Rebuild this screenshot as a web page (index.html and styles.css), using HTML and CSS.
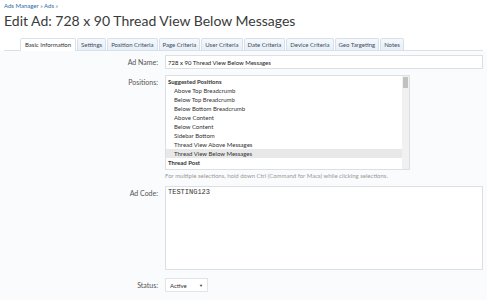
FILE: index.html
```html
<!DOCTYPE html>
<html lang="en">

<head>
    <meta charset="UTF-8">
    <title>Edit Ad</title>
    <link rel="stylesheet" href="styles.css">
</head>

<body>
    <div class="crumbs">
        <a href="#">Ads Manager</a> <span class="sep">&raquo;</span>
        <a href="#">Ads</a> <span class="sep">&raquo;</span>
    </div>
    <h1 class="title">Edit Ad: 728 x 90 Thread View Below Messages</h1>

    <ul class="tabs">
        <li class="active">Basic Information</li>
        <li>Settings</li>
        <li>Position Criteria</li>
        <li>Page Criteria</li>
        <li>User Criteria</li>
        <li>Date Criteria</li>
        <li>Device Criteria</li>
        <li>Geo Targeting</li>
        <li>Notes</li>
    </ul>

    <form class="ad-form">
        <div class="row">
            <label class="row-label">Ad Name:</label>
            <div class="row-input">
                <input class="text-input" type="text" value="728 x 90 Thread View Below Messages">
            </div>
        </div>

        <div class="row">
            <label class="row-label">Positions:</label>
            <div class="row-input">
                <div class="listbox">
                    <div class="options">
                        <div class="group">Suggested Positions</div>
                        <div class="opt">Above Top Breadcrumb</div>
                        <div class="opt">Below Top Breadcrumb</div>
                        <div class="opt">Below Bottom Breadcrumb</div>
                        <div class="opt">Above Content</div>
                        <div class="opt">Below Content</div>
                        <div class="opt">Sidebar Bottom</div>
                        <div class="opt">Thread View Above Messages</div>
                        <div class="opt selected">Thread View Below Messages</div>
                        <div class="group">Thread Post</div>
                        <div class="opt">Inside Thread Message (Random or Specific Position)</div>
                    </div>
                    <div class="scrollbar"><div class="thumb"></div></div>
                </div>
                <p class="hint">For multiple selections, hold down Ctrl (Command for Macs) while clicking selections.</p>
            </div>
        </div>

        <div class="row">
            <label class="row-label">Ad Code:</label>
            <div class="row-input">
                <textarea class="code">TESTING123</textarea>
            </div>
        </div>

        <div class="row status-row">
            <label class="row-label">Status:</label>
            <div class="row-input">
                <div class="dropdown">Active <span class="arrow">&#9660;</span></div>
            </div>
        </div>
    </form>
</body>

</html>
```
FILE: styles.css
```css
body {
    margin: 0;
    padding: 0 4px;
    font-family: Lato, "Liberation Sans", sans-serif;
    color: #333;
    background: #ffffff;
    overflow: hidden;
}

.crumbs {
    font-size: 6px;
    line-height: 8px;
    padding-top: 2px;
}

.crumbs a {
    color: #2b6aa3;
    text-decoration: none;
}

.crumbs .sep {
    color: #777;
}

.title {
    font-size: 14px;
    font-weight: normal;
    line-height: 18px;
    margin: 2px 0 0;
    color: #3a3a3a;
}

.tabs {
    list-style: none;
    margin: 8px 0 0;
    padding: 0 0 0 16px;
    display: flex;
    border-bottom: 1px solid #d7e1ec;
    height: 12px;
}

.tabs li {
    font-size: 6px;
    line-height: 11px;
    padding: 0 3px;
    margin-right: 1px;
    border: 1px solid #d7e1ec;
    border-bottom: none;
    border-radius: 2px 2px 0 0;
    background: linear-gradient(#f5f8fc, #e8eff7);
    color: #3c4c5c;
}

.tabs li.active {
    background: #ffffff;
    height: 12px;
    padding: 0 4px;
    color: #333;
}

.ad-form {
    background: #fafbfc;
    margin: 0 -4px;
    padding: 4px 4px 0;
    height: 250px;
    border-bottom: 1px solid #eceef1;
}

.row {
    display: flex;
    margin-bottom: 6px;
}

.status-row {
    margin-top: 8px;
}

.row-label {
    width: 154px;
    text-align: right;
    font-size: 7px;
    line-height: 8px;
    color: #555;
    padding-top: 3px;
    padding-right: 7px;
    flex-shrink: 0;
}

.row-input {
    flex: 1;
    min-width: 0;
}

.text-input {
    display: block;
    width: 100%;
    box-sizing: border-box;
    height: 14px;
    border: 1px solid #dcdfe3;
    background: #ffffff;
    font-family: Lato, "Liberation Sans", sans-serif;
    font-size: 6px;
    color: #222;
    padding: 0 2px;
    margin: 0;
}

.listbox {
    width: 245px;
    height: 95px;
    box-sizing: border-box;
    border: 1px solid #dcdfe3;
    background: #ffffff;
    display: flex;
    overflow: hidden;
}

.options {
    flex: 1;
    min-width: 0;
    padding-top: 1px;
    font-size: 6px;
    line-height: 9px;
    color: #333;
    overflow: hidden;
}

.group {
    font-weight: bold;
    padding-left: 2px;
}

.opt {
    padding-left: 8px;
    white-space: nowrap;
    overflow: hidden;
}

.opt.selected {
    background: #e8e8e8;
}

.scrollbar {
    width: 7px;
    background: #f1f1f1;
    padding-top: 1px;
}

.thumb {
    height: 11px;
    margin: 0 1px;
    background: #c1c1c1;
}

.hint {
    margin: 1px 0 0;
    font-size: 6px;
    line-height: 9px;
    color: #999;
}

.code {
    display: block;
    width: 100%;
    box-sizing: border-box;
    height: 84px;
    border: 1px solid #dcdfe3;
    background: #ffffff;
    font-family: "Liberation Mono", monospace;
    font-size: 7px;
    line-height: 9px;
    color: #333;
    padding: 1px 2px;
    resize: none;
    margin: 0;
}

.dropdown {
    display: flex;
    align-items: center;
    justify-content: space-between;
    width: 43px;
    height: 14px;
    box-sizing: border-box;
    border: 1px solid #e2e4e8;
    background: #ffffff;
    font-size: 6px;
    padding: 0 4px;
    color: #333;
}

.arrow {
    font-size: 4px;
}
```
